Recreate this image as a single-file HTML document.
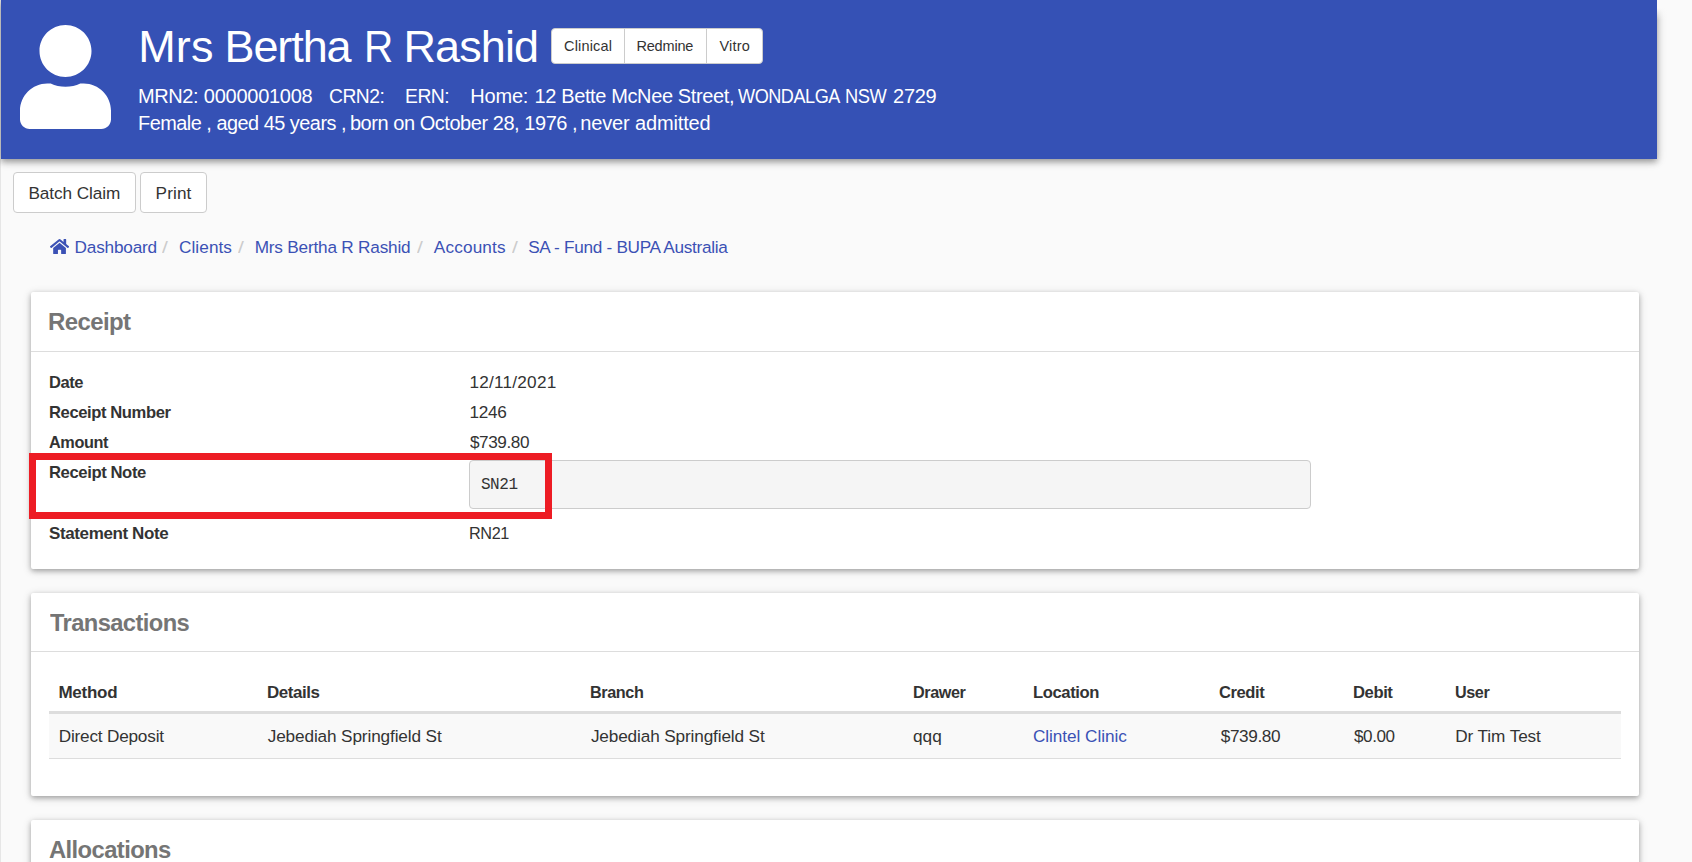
<!DOCTYPE html>
<html lang="en"><head><meta charset="utf-8"><title>Receipt</title>
<style>
html,body{margin:0;padding:0;background:#fafafa}
body{font-family:"Liberation Sans",sans-serif;color:#333;overflow:hidden}
#page{position:relative;width:1692px;height:862px;overflow:hidden;background:#fafafa;box-shadow:inset 1px 0 0 #e6e6e6}
.abs{position:absolute}
.t{position:absolute;transform-origin:0 0;margin:0;padding:0;white-space:pre;line-height:1;font-weight:400;font-family:"Liberation Sans",sans-serif;color:#333;text-decoration:none;border:0;background:none}
.hdr{position:absolute;left:1px;top:0;width:1656px;height:159px;background:#3551b5;box-shadow:0 3px 6px 0 rgba(0,0,0,.3),0 2px 10px 0 rgba(0,0,0,.16)}
.hdr .t,.hdr .abs{margin-left:-1px}
.btn-group{box-sizing:border-box;position:absolute;left:550px;top:28px;width:212px;height:36px;background:#fff;border:1px solid #ccc;border-radius:4px}
.btn-group i{position:absolute;top:0;width:1px;height:34px;background:#ccc}
.btn{position:absolute;top:172px;height:41px;background:#fff;border:1px solid #ccc;border-radius:4px;box-sizing:border-box}
.card{position:absolute;left:31px;width:1608px;background:#fff;border-radius:2px;box-shadow:0 2px 5px 0 rgba(0,0,0,.26),0 2px 10px 0 rgba(0,0,0,.16)}
.card .hr{position:absolute;left:0;right:0;top:59px;height:1px;background:#ddd}
.pre{box-sizing:border-box;position:absolute;left:469px;top:460px;width:842px;height:49px;background:#f5f5f5;border:1px solid #ccc;border-radius:4px}
.redbox{box-sizing:border-box;position:absolute;left:29px;top:453px;width:523px;height:66px;border:7px solid #ed1c24}
.thead{position:absolute;left:49px;top:711px;width:1572px;height:3px;background:#ddd}
.trow{position:absolute;left:49px;top:714px;width:1572px;height:44px;background:#f9f9f9;border-bottom:1px solid #ddd}
h1.name,p.meta{margin:0;padding:0;font-size:0;line-height:0}
.hdr-fade{position:absolute;left:1656px;top:0;width:16px;height:20px;background:linear-gradient(#fafafa 40%,rgba(250,250,250,0))}

</style></head>
<body>
<div id="page">
<header class="hdr">
<svg class="abs" style="left:20px;top:25px;width:91px;height:104px" viewBox="0 0 448 512"><path fill="#fff" d="M224 256c70.7 0 128-57.3 128-128S294.7 0 224 0 96 57.3 96 128s57.3 128 128 128zm89.6 32h-16.7c-22.2 10.2-46.9 16-72.9 16s-50.6-5.8-72.9-16h-16.7C60.2 288 0 348.2 0 422.4V464c0 26.5 21.5 48 48 48h352c26.5 0 48-21.5 48-48v-41.6c0-74.2-60.2-134.4-134.4-134.4z"/></svg>
<h1 class="name"><span class="t" style="left:138.2px;top:24.0px;font-size:45px;color:#fff;letter-spacing:0.2px;">Mrs</span>
<span class="t" style="left:224.5px;top:24.0px;font-size:45px;color:#fff;letter-spacing:-1.1px;">Bertha</span>
<span class="t" style="left:364.4px;top:24.0px;font-size:45px;color:#fff;transform:scaleX(0.9);">R</span>
<span class="t" style="left:403.4px;top:24.0px;font-size:45px;color:#fff;letter-spacing:-0.88px;">Rashid</span></h1>
<p class="meta"><span class="t" style="left:138.0px;top:86.0px;font-size:20px;color:#fff;letter-spacing:-0.4px;">MRN2:</span>
<span class="t" style="left:203.8px;top:86.0px;font-size:20px;color:#fff;letter-spacing:-0.256px;">0000001008</span>
<span class="t" style="left:328.74px;top:86.0px;font-size:20px;color:#fff;letter-spacing:-0.5px;transform:scaleX(0.9636);">CRN2:</span>
<span class="t" style="left:405.07px;top:86.0px;font-size:20px;color:#fff;letter-spacing:-0.5px;transform:scaleX(0.9647);">ERN:</span>
<span class="t" style="left:470.3px;top:86.0px;font-size:20px;color:#fff;letter-spacing:-0.2px;">Home:</span>
<span class="t" style="left:534.5px;top:86.0px;font-size:20px;color:#fff;letter-spacing:-0.376px;">12 Bette McNee Street,</span>
<span class="t" style="left:737.7px;top:86.0px;font-size:20px;color:#fff;letter-spacing:-0.5px;transform:scaleX(0.9048);">WONDALGA</span>
<span class="t" style="left:845.27px;top:86.0px;font-size:20px;color:#fff;letter-spacing:-0.5px;transform:scaleX(0.9136);">NSW</span>
<span class="t" style="left:893.1px;top:86.0px;font-size:20px;color:#fff;letter-spacing:-0.3px;">2729</span>
<span class="t" style="left:137.91px;top:113.0px;font-size:20px;color:#fff;letter-spacing:-0.5px;transform:scaleX(0.9942);">Female , aged 45 years ,</span>
<span class="t" style="left:349.9px;top:113.0px;font-size:20px;color:#fff;letter-spacing:-0.452px;">born on October 28, 1976 ,</span>
<span class="t" style="left:580.2px;top:113.0px;font-size:20px;color:#fff;letter-spacing:-0.138px;">never admitted</span></p>
<div class="btn-group"><i style="left:72px"></i><i style="left:154px"></i></div>
<a class="t" style="left:564.0px;top:39.0px;font-size:14.5px;letter-spacing:0.171px;">Clinical</a>
<a class="t" style="left:636.4px;top:39.0px;font-size:14.5px;letter-spacing:-0.167px;">Redmine</a>
<a class="t" style="left:719.4px;top:39.0px;font-size:14.5px;letter-spacing:0.225px;">Vitro</a>
<div class="hdr-fade"></div>
</header>
<div class="toolbar">
<div class="btn" style="left:13px;width:123px"></div><div class="btn" style="left:140px;width:67px"></div>
<a class="t" style="left:28.5px;top:185.0px;font-size:17.2px;letter-spacing:-0.09px;">Batch Claim</a>
<a class="t" style="left:155.6px;top:185.0px;font-size:17.2px;letter-spacing:0.1px;">Print</a>
</div>
<nav class="breadcrumb">
<svg class="abs" style="left:50px;top:237.9px;width:19.1px;height:17px" viewBox="0 0 576 512"><path fill="#3b51b5" d="M280.37 148.26L96 300.11V464a16 16 0 0 0 16 16l112.06-.29a16 16 0 0 0 15.92-16V368a16 16 0 0 1 16-16h64a16 16 0 0 1 16 16v95.64a16 16 0 0 0 16 16.05L464 480a16 16 0 0 0 16-16V300L295.67 148.26a12.19 12.19 0 0 0-15.3 0zM571.6 251.47L488 182.56V44.05a12 12 0 0 0-12-12h-56a12 12 0 0 0-12 12v72.61L318.47 43a48 48 0 0 0-61 0L4.34 251.47a12 12 0 0 0-1.6 16.9l25.5 31A12 12 0 0 0 45.15 301l235.22-193.74a12.19 12.19 0 0 1 15.3 0L530.9 301a12 12 0 0 0 16.9-1.6l25.5-31a12 12 0 0 0-1.7-16.93z"/></svg>
<a class="t" style="left:74.6px;top:239.0px;font-size:17.2px;color:#3b51b5;letter-spacing:-0.2px;">Dashboard</a>
<a class="t" style="left:179.0px;top:239.0px;font-size:17.2px;color:#3b51b5;letter-spacing:0.067px;">Clients</a>
<a class="t" style="left:254.7px;top:239.0px;font-size:17.2px;color:#3b51b5;letter-spacing:-0.2px;">Mrs Bertha R Rashid</a>
<a class="t" style="left:433.8px;top:239.0px;font-size:17.2px;color:#3b51b5;letter-spacing:0.157px;">Accounts</a>
<a class="t" style="left:528.2px;top:239.0px;font-size:17.2px;color:#3b51b5;letter-spacing:-0.292px;">SA - Fund - BUPA Australia</a>
<span class="t" style="left:162.3px;top:239.0px;font-size:17.2px;color:#ccc;transform:scaleX(1.22);">/</span>
<span class="t" style="left:237.8px;top:239.0px;font-size:17.2px;color:#ccc;transform:scaleX(1.22);">/</span>
<span class="t" style="left:416.5px;top:239.0px;font-size:17.2px;color:#ccc;transform:scaleX(1.22);">/</span>
<span class="t" style="left:511.5px;top:239.0px;font-size:17.2px;color:#ccc;transform:scaleX(1.22);">/</span>
</nav>
<section class="card" style="top:292px;height:277px"><div class="hr"></div></section>
<section class="card" style="top:593px;height:203px"><div class="hr" style="top:58px"></div></section>
<section class="card" style="top:820px;height:120px"><div class="hr"></div></section>
<div class="receipt">
<h3 class="t" style="left:48.14px;top:310.0px;font-size:24.5px;font-weight:700;color:#757575;letter-spacing:-0.613px;transform:scaleX(0.979);">Receipt</h3>
<label class="t" style="left:49.03px;top:374.0px;font-size:17px;font-weight:700;letter-spacing:-0.425px;transform:scaleX(0.9705);">Date</label>
<label class="t" style="left:49.02px;top:404.0px;font-size:17px;font-weight:700;letter-spacing:-0.425px;transform:scaleX(0.9767);">Receipt Number</label>
<label class="t" style="left:49.04px;top:434.0px;font-size:17px;font-weight:700;letter-spacing:-0.425px;transform:scaleX(0.9577);">Amount</label>
<span class="t" style="left:469.4px;top:374.0px;font-size:17.2px;letter-spacing:0.233px;">12/11/2021</span>
<span class="t" style="left:469.4px;top:404.0px;font-size:17.2px;letter-spacing:-0.233px;">1246</span>
<span class="t" style="left:470.4px;top:434.0px;font-size:17.2px;letter-spacing:-0.43px;transform:scaleX(0.998);">$739.80</span>
<div class="pre"></div>
<label class="t" style="left:49.02px;top:464.0px;font-size:17px;font-weight:700;letter-spacing:-0.425px;transform:scaleX(0.9804);">Receipt Note</label>
<label class="t" style="left:49.0px;top:525.0px;font-size:17px;font-weight:700;letter-spacing:-0.385px;">Statement Note</label>
<span class="t" style="left:469.45px;top:525.0px;font-size:17.2px;letter-spacing:-0.43px;transform:scaleX(0.9457);">RN21</span>
<pre class="t" style="left:480.9px;top:477.0px;font-size:16px;letter-spacing:-0.4px;font-family:'Liberation Mono',monospace;">SN21</pre>
</div>
<div class="tx">
<h3 class="t" style="left:49.5px;top:611.0px;font-size:24.5px;font-weight:700;color:#757575;letter-spacing:-0.613px;transform:scaleX(0.9675);">Transactions</h3>
<div class="thead"></div><div class="trow"></div>
<b class="t" style="left:58.4px;top:684.0px;font-size:17px;font-weight:700;letter-spacing:-0.26px;">Method</b>
<b class="t" style="left:266.9px;top:684.0px;font-size:17px;font-weight:700;letter-spacing:-0.425px;transform:scaleX(0.9951);">Details</b>
<b class="t" style="left:589.95px;top:684.0px;font-size:17px;font-weight:700;letter-spacing:-0.425px;transform:scaleX(0.9531);">Branch</b>
<b class="t" style="left:912.65px;top:684.0px;font-size:17px;font-weight:700;letter-spacing:-0.425px;transform:scaleX(0.9531);">Drawer</b>
<b class="t" style="left:1032.62px;top:684.0px;font-size:17px;font-weight:700;letter-spacing:-0.425px;transform:scaleX(0.9784);">Location</b>
<b class="t" style="left:1219.43px;top:684.0px;font-size:17px;font-weight:700;letter-spacing:-0.425px;transform:scaleX(0.9722);">Credit</b>
<b class="t" style="left:1352.92px;top:684.0px;font-size:17px;font-weight:700;letter-spacing:-0.425px;transform:scaleX(0.9771);">Debit</b>
<b class="t" style="left:1455.05px;top:684.0px;font-size:17px;font-weight:700;letter-spacing:-0.425px;transform:scaleX(0.9517);">User</b>
<span class="t" style="left:58.7px;top:728.0px;font-size:17.2px;letter-spacing:-0.2px;">Direct Deposit</span>
<span class="t" style="left:267.7px;top:728.0px;font-size:17.2px;letter-spacing:-0.127px;">Jebediah Springfield St</span>
<span class="t" style="left:590.9px;top:728.0px;font-size:17.2px;letter-spacing:-0.136px;">Jebediah Springfield St</span>
<span class="t" style="left:912.9px;top:728.0px;font-size:17.2px;letter-spacing:0.15px;">qqq</span>
<span class="t" style="left:1032.9px;top:728.0px;font-size:17.2px;color:#3b51b5;letter-spacing:-0.046px;">Clintel Clinic</span>
<span class="t" style="left:1220.7px;top:728.0px;font-size:17.2px;letter-spacing:-0.367px;">$739.80</span>
<span class="t" style="left:1354.0px;top:728.0px;font-size:17.2px;letter-spacing:-0.43px;transform:scaleX(0.9932);">$0.00</span>
<span class="t" style="left:1455.3px;top:728.0px;font-size:17.2px;letter-spacing:-0.1px;">Dr Tim Test</span>
</div>
<h3 class="t" style="left:48.53px;top:838.0px;font-size:24.5px;font-weight:700;color:#757575;letter-spacing:-0.613px;transform:scaleX(0.9711);">Allocations</h3>
<div class="redbox"></div>
</div>
</body></html>
